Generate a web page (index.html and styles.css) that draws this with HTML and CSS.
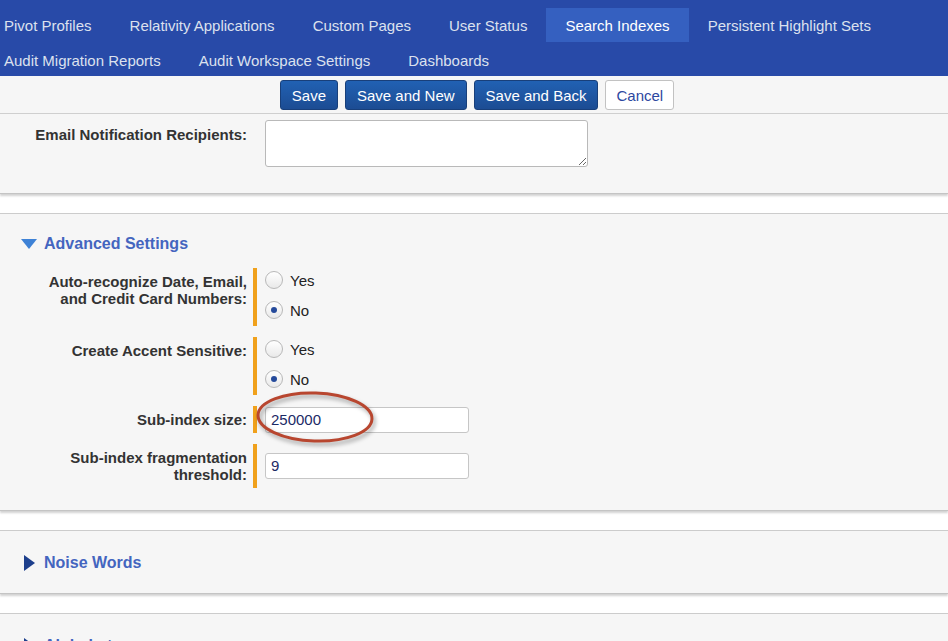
FILE: index.html
```html
<!DOCTYPE html>
<html>
<head>
<meta charset="utf-8">
<link rel="stylesheet" href="styles.css">
</head>
<body>
<nav class="tabs">
  <div class="tab-row">
    <a class="tab">Pivot Profiles</a>
    <a class="tab">Relativity Applications</a>
    <a class="tab">Custom Pages</a>
    <a class="tab">User Status</a>
    <a class="tab active">Search Indexes</a>
    <a class="tab">Persistent Highlight Sets</a>
  </div>
  <div class="tab-row second">
    <a class="tab">Audit Migration Reports</a>
    <a class="tab">Audit Workspace Settings</a>
    <a class="tab">Dashboards</a>
  </div>
</nav>

<div class="toolbar">
  <button class="btn primary">Save</button>
  <button class="btn primary">Save and New</button>
  <button class="btn primary">Save and Back</button>
  <button class="btn secondary">Cancel</button>
</div>

<section class="card card-top">
  <div class="row">
    <div class="label">Email Notification Recipients:</div>
    <div class="field plain"><textarea class="textarea"></textarea></div>
  </div>
</section>

<section class="card card-adv">
  <div class="card-head head-adv"><span class="tri-down"></span><span class="head-text">Advanced Settings</span></div>
  <div class="rows">
    <div class="row">
      <div class="label">Auto-recognize Date, Email,<br>and Credit Card Numbers:</div>
      <div class="field radios">
        <div class="radio-item"><span class="radio"></span>Yes</div>
        <div class="radio-item"><span class="radio checked"></span>No</div>
      </div>
    </div>
    <div class="row">
      <div class="label">Create Accent Sensitive:</div>
      <div class="field radios">
        <div class="radio-item"><span class="radio"></span>Yes</div>
        <div class="radio-item"><span class="radio checked"></span>No</div>
      </div>
    </div>
    <div class="row">
      <div class="label">Sub-index size:</div>
      <div class="field centered">
        <div class="input">250000</div>
        <svg class="circle-mark" width="128" height="62" viewBox="0 0 128 62">
          <ellipse cx="60" cy="27" rx="57" ry="24" transform="rotate(2 60 27)" fill="none" stroke="#b8462f" stroke-width="3"/>
        </svg>
      </div>
    </div>
    <div class="row">
      <div class="label">Sub-index fragmentation<br>threshold:</div>
      <div class="field centered"><div class="input">9</div></div>
    </div>
  </div>
</section>

<section class="card card-collapsed">
  <div class="card-head"><span class="tri-right"></span><span class="head-text">Noise Words</span></div>
</section>

<section class="card card-last">
  <div class="card-head"><span class="tri-right"></span><span class="head-text">Alphabet</span></div>
</section>
</body>
</html>
```

FILE: styles.css
```css
html, body {
  margin: 0;
  padding: 0;
  background: #ffffff;
  font-family: "Liberation Sans", Arial, sans-serif;
  overflow: hidden;
}

.tabs {
  background: #284aa8;
  padding-top: 8px;
  height: 76px;
  box-sizing: border-box;
}

.tab-row {
  display: flex;
  margin-left: -15px;
}

.tab-row.second {
  margin-top: 1px;
}

.tab {
  padding: 1px 19px 0;
  line-height: 33px;
  font-size: 15px;
  color: #dce1ee;
  white-space: nowrap;
}

.tab.active {
  background: #3560c0;
  color: #ffffff;
}

.toolbar {
  display: flex;
  justify-content: center;
  gap: 7px;
  padding: 4px 0 0 6px;
  height: 38px;
  box-sizing: border-box;
  background: #f6f6f6;
  border-bottom: 1px solid #cfcfcf;
}

.btn {
  height: 30px;
  padding: 0 11px;
  font-family: "Liberation Sans", Arial, sans-serif;
  font-size: 15px;
  border-radius: 3px;
  box-sizing: border-box;
}

.btn.primary {
  color: #ffffff;
  background: linear-gradient(#2161b3, #1c4c93);
  border: 1px solid #183f7a;
}

.btn.secondary {
  color: #2d47a0;
  background: #ffffff;
  border: 1px solid #c2c2c2;
  padding: 0 10px;
}

.card {
  background: #f6f6f6;
  border-top: 1px solid #cccccc;
  border-bottom: 1px solid #c4c4c4;
  box-shadow: 0 2px 2px rgba(0, 0, 0, 0.18);
  margin-bottom: 19px;
}

.card-top {
  border-top: none;
  padding: 6px 0 26px;
}

.card-adv {
  padding-bottom: 22px;
}

.card-head {
  display: flex;
  align-items: center;
  height: 18px;
  padding: 23px 0 21px 24px;
}

.head-adv {
  padding: 21px 0 15px 21px;
}

.head-text {
  font-size: 16px;
  font-weight: bold;
  color: #4465bf;
  line-height: 18px;
}

.tri-down {
  width: 0;
  height: 0;
  border-left: 8px solid transparent;
  border-right: 8px solid transparent;
  border-top: 10px solid #3e82d6;
  margin-right: 7px;
}

.tri-right {
  width: 0;
  height: 0;
  border-top: 8px solid transparent;
  border-bottom: 8px solid transparent;
  border-left: 11px solid #1d3f8c;
  margin-right: 9px;
}

.rows {
  display: flex;
  flex-direction: column;
  gap: 11px;
}

.row {
  display: flex;
  align-items: stretch;
}

.label {
  width: 247px;
  box-sizing: border-box;
  padding: 5px 0 5px 20px;
  text-align: right;
  font-size: 15px;
  font-weight: bold;
  line-height: 17px;
  color: #333333;
}

.card-top .label {
  padding-top: 6px;
}

.field {
  margin-left: 6px;
  border-left: 4px solid #f0a11c;
  padding-left: 8px;
  position: relative;
}

.field.plain {
  border-left-color: transparent;
}

.field.centered {
  display: flex;
  align-items: center;
}

.textarea {
  width: 323px;
  height: 47px;
  box-sizing: border-box;
  border: 1px solid #b9b9b9;
  border-radius: 3px;
  background: #ffffff;
  display: block;
  margin: 0;
}

.radios {
  display: flex;
  flex-direction: column;
  gap: 6px;
  padding-bottom: 4px;
}

.radio-item {
  display: flex;
  align-items: center;
  height: 24px;
  font-size: 15px;
  color: #222222;
}

.radio {
  width: 18px;
  height: 18px;
  box-sizing: border-box;
  border-radius: 50%;
  border: 1px solid #b8b8b8;
  background: linear-gradient(#ffffff, #e9e9e9);
  margin-right: 7px;
  position: relative;
}

.radio.checked::after {
  content: "";
  position: absolute;
  left: 5px;
  top: 5px;
  width: 6px;
  height: 6px;
  border-radius: 50%;
  background: #254a9b;
}

.input {
  width: 204px;
  height: 26px;
  box-sizing: border-box;
  border: 1px solid #c6c6c6;
  border-radius: 3px;
  background: #ffffff;
  padding-left: 5px;
  font-size: 15px;
  line-height: 24px;
  color: #1b2a66;
}

.circle-mark {
  position: absolute;
  left: -2px;
  top: -16px;
  filter: drop-shadow(2px 3px 2px rgba(0, 0, 0, 0.35));
}

.card-last {
  height: 40px;
}
```
